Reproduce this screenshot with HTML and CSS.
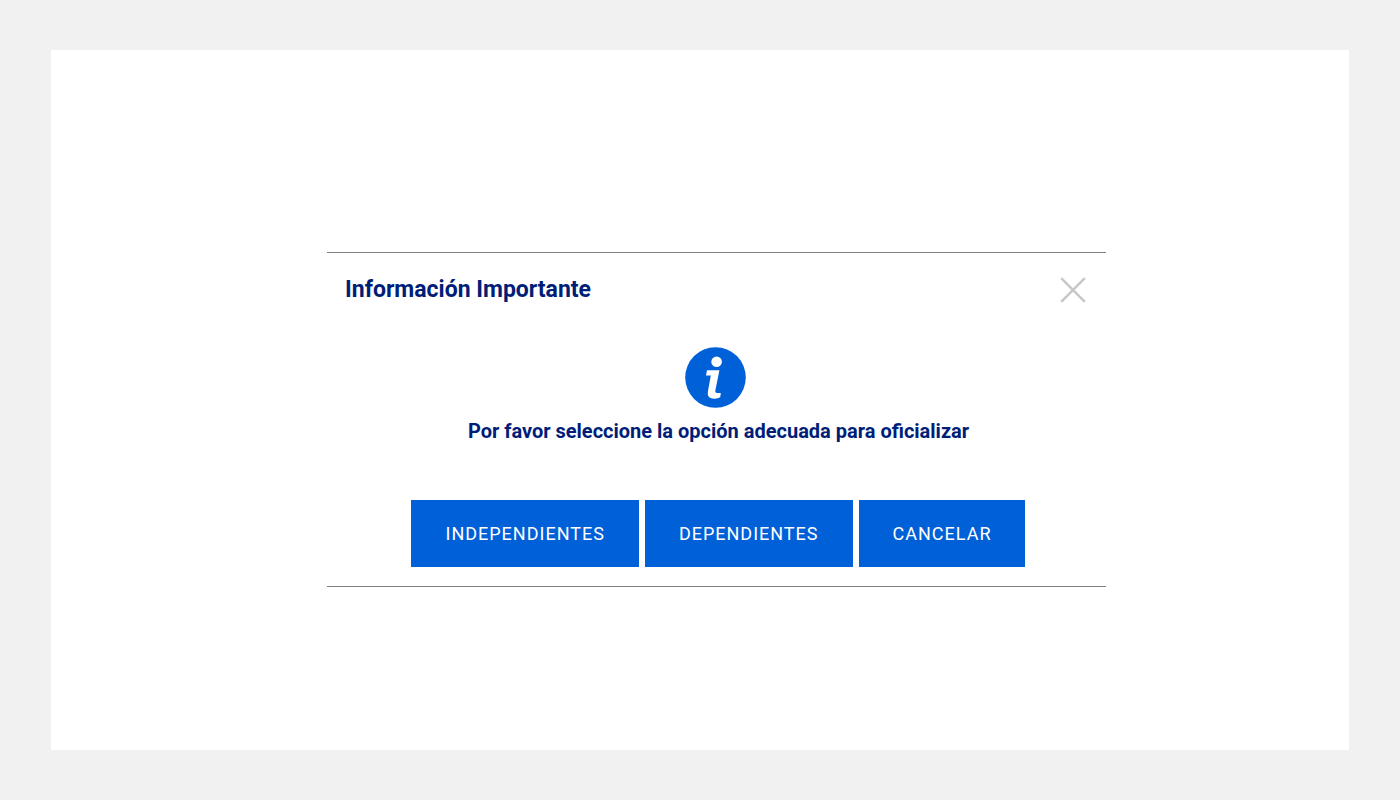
FILE: index.html
```html
<!DOCTYPE html>
<html lang="es">
<head>
    <meta charset="UTF-8">
    <meta name="viewport" content="width=device-width, initial-scale=1.0">
    <title>Información Importante</title>
    <link rel="stylesheet" href="styles.css">
</head>
<body>
    <main class="page">
        <section class="modal" role="dialog" aria-labelledby="modalTitle" aria-describedby="modalMessage">
            <header class="modal-header">
                <h1 id="modalTitle">Información Importante</h1>
                <button type="button" class="close" aria-label="Cerrar">
                    <svg width="26" height="26" viewBox="0 0 26 26" fill="none" stroke="#c8c8c8" stroke-width="2.6">
                        <path d="M1.2 1.2 24.8 24.8M24.8 1.2 1.2 24.8"/>
                    </svg>
                </button>
            </header>

            <div class="modal-body">
                <svg class="info-icon" viewBox="0 0 61 61" aria-hidden="true">
                    <circle cx="30.5" cy="30.5" r="30.3" fill="#0060d8"/>
                    <circle cx="31.6" cy="14.8" r="5.3" fill="#fff"/>
                    <path fill="#fff" d="M22 23.3H34.4L30.4 43.2Q29.9 45.9 32 45.9H35.8L35.2 50.3Q33 51.7 29.5 51.7Q21.6 51.7 22.9 44.5L25.8 28.6H21Z"/>
                </svg>
                <p id="modalMessage">Por favor seleccione la opción adecuada para oficializar</p>
            </div>

            <footer class="modal-actions">
                <button type="button" class="btn">INDEPENDIENTES</button>
                <button type="button" class="btn">DEPENDIENTES</button>
                <button type="button" class="btn">CANCELAR</button>
            </footer>
        </section>
    </main>
</body>
</html>
```
FILE: styles.css
```css
* {
    box-sizing: border-box;
}

body {
    margin: 0;
    min-height: 100vh;
    padding: 50px 51px;
    display: flex;
    background-color: #f1f1f1;
    font-family: Roboto, "Liberation Sans", Arial, sans-serif;
}

.page {
    flex: 1;
    display: flex;
    justify-content: center;
    align-items: center;
    padding-top: 38px;
    background-color: #fff;
}

.modal {
    width: 60%;
    min-width: 660px;
    margin-left: 33px;
    padding: 24px 20px 19px 18px;
    border-top: 1px solid #808080;
    border-bottom: 1px solid #808080;
    color: #001e78;
}

.modal-header {
    display: flex;
    justify-content: space-between;
    align-items: center;
}

.modal-header h1 {
    margin: 0;
    font-size: 23px;
    line-height: 26px;
}

.close {
    display: flex;
    padding: 0;
    border: none;
    background: none;
    cursor: pointer;
}

.modal-body {
    display: flex;
    flex-direction: column;
    align-items: center;
    gap: 10px;
    padding-top: 44px;
}

.info-icon {
    width: 61px;
    height: 61px;
}

.modal-body p {
    margin: 0;
    padding-left: 6px;
    font-size: 20px;
    font-weight: bold;
    line-height: 26px;
    text-align: center;
}

.modal-actions {
    display: flex;
    justify-content: center;
    gap: 6px;
    margin-top: 56px;
    padding-left: 6px;
}

.btn {
    height: 67px;
    padding: 0 34px;
    border: none;
    background-color: #0060d8;
    color: #fff;
    font-family: inherit;
    font-size: 18px;
    letter-spacing: 1px;
    cursor: pointer;
}

.btn:hover {
    background-color: #0052ba;
}
```
